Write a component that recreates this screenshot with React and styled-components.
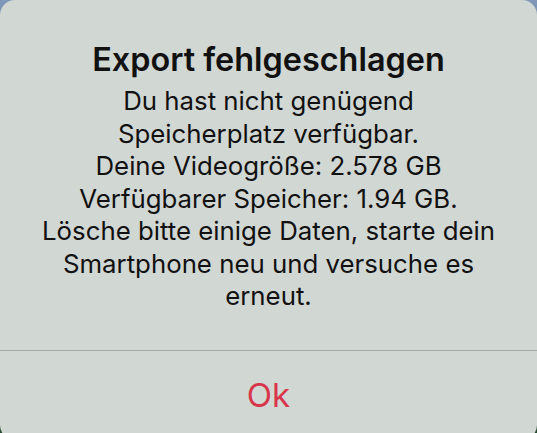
import React from 'react'
import styled, { createGlobalStyle } from 'styled-components'

const GlobalStyle = createGlobalStyle`
  html, body {
    margin: 0;
    padding: 0;
    height: 100%;
    overflow: hidden;
    background: linear-gradient(180deg, #7f97b8 0%, #6c8266 50%, #284a30 100%);
  }
  #root {
    height: 100%;
  }
`;

const Alert = styled.div`
  width: 100%;
  height: 440px;
  background-color: #d1d7d3;
  border-radius: 15px;
  display: flex;
  flex-direction: column;
  font-family: Inter, "Noto Sans", "Liberation Sans", sans-serif;
  color: #111;
  overflow: hidden;
`;

const Body = styled.div`
  display: flex;
  flex-direction: column;
  align-items: center;
  text-align: center;
  padding: 40px 16px 37px;
`;

const Title = styled.div`
  font-size: 32.4px;
  font-weight: 600;
  line-height: 40px;
`;

const Message = styled.div`
  margin-top: 5px;
  font-size: 25.8px;
  font-weight: 400;
  line-height: 32.5px;
`;

const Divider = styled.div`
  height: 1px;
  background-color: #a3a8a5;
`;

const Action = styled.button`
  height: 88px;
  padding: 0;
  border: none;
  background: transparent;
  color: ${({ $tone }) => ($tone === 'danger' ? '#d8354b' : '#0a6fe0')};
  font-family: Inter, "Noto Sans", "Liberation Sans", sans-serif;
  font-size: 33px;
  font-weight: 400;
  cursor: pointer;
`;

const lines = [
  'Du hast nicht genügend',
  'Speicherplatz verfügbar.',
  'Deine Videogröße: 2.578 GB',
  'Verfügbarer Speicher: 1.94 GB.',
  'Lösche bitte einige Daten, starte dein',
  'Smartphone neu und versuche es',
  'erneut.',
]

const App = () => {
  return (
    <>
      <GlobalStyle />
      <Alert>
        <Body>
          <Title>Export fehlgeschlagen</Title>
          <Message>
            {lines.map((line) => (
              <div key={line}>{line}</div>
            ))}
          </Message>
        </Body>
        <Divider />
        <Action $tone="danger">Ok</Action>
      </Alert>
    </>
  )
}

export default App
